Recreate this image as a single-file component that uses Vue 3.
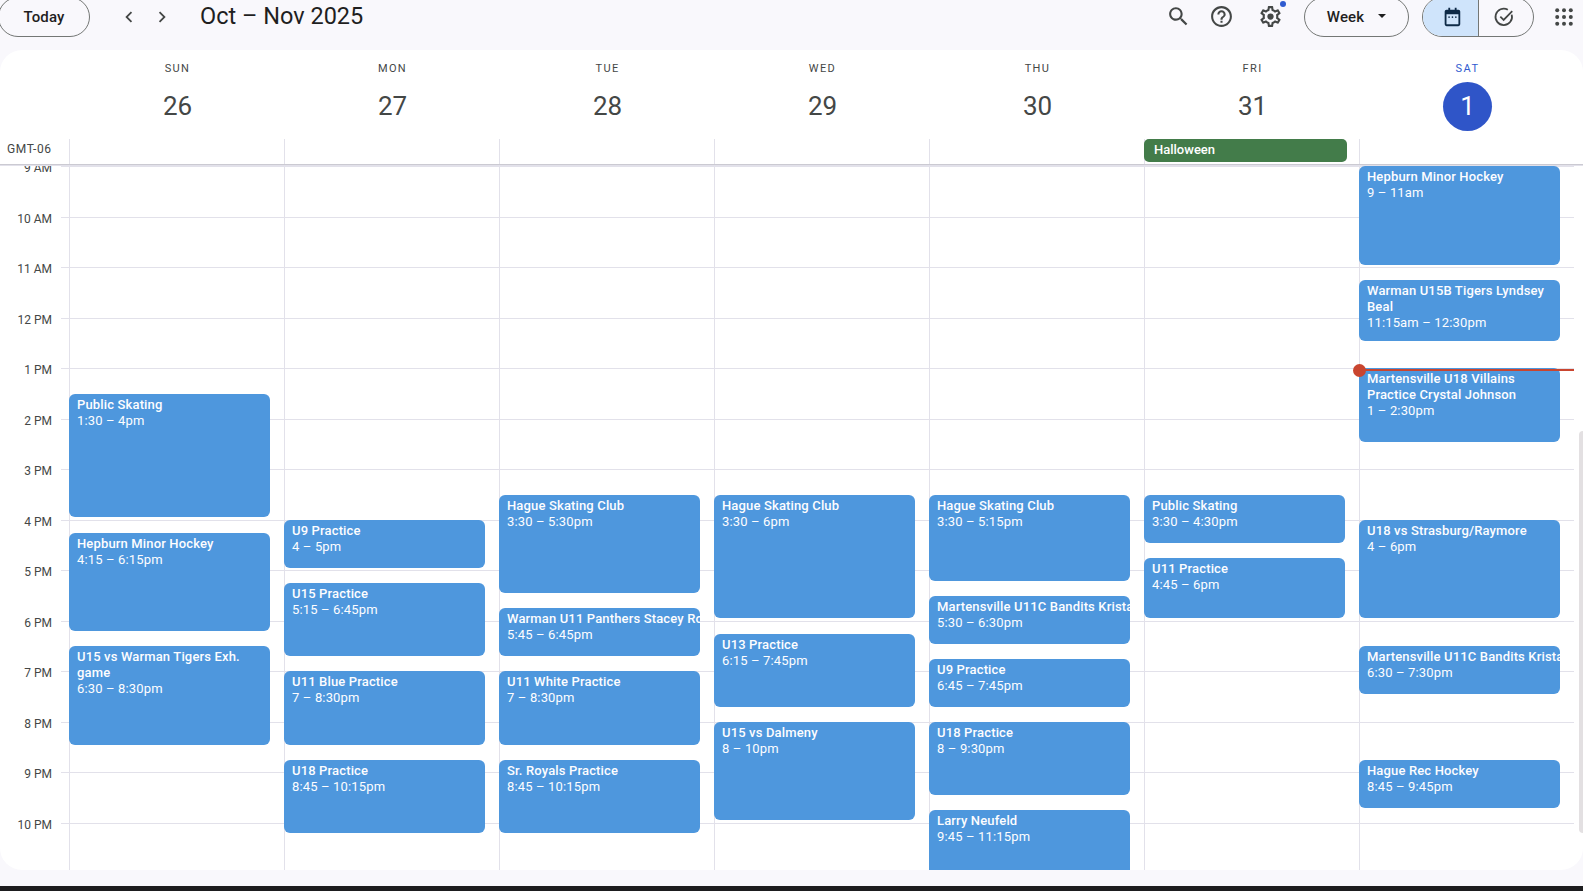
<script setup>
const HOUR = 50.5
const days = [
  { name: 'SUN', num: 26 }, { name: 'MON', num: 27 }, { name: 'TUE', num: 28 },
  { name: 'WED', num: 29 }, { name: 'THU', num: 30 }, { name: 'FRI', num: 31 },
  { name: 'SAT', num: 1, today: true }
]
const hours = ['9 AM','10 AM','11 AM','12 PM','1 PM','2 PM','3 PM','4 PM','5 PM','6 PM','7 PM','8 PM','9 PM','10 PM','11 PM']
const events = [
  [
    { t: 'Public Skating', w: '1:30 – 4pm', s: 13.5, e: 16 },
    { t: 'Hepburn Minor Hockey', w: '4:15 – 6:15pm', s: 16.25, e: 18.25 },
    { t: 'U15 vs Warman Tigers Exh. game', w: '6:30 – 8:30pm', s: 18.5, e: 20.5 }
  ],
  [
    { t: 'U9 Practice', w: '4 – 5pm', s: 16, e: 17 },
    { t: 'U15 Practice', w: '5:15 – 6:45pm', s: 17.25, e: 18.75 },
    { t: 'U11 Blue Practice', w: '7 – 8:30pm', s: 19, e: 20.5 },
    { t: 'U18 Practice', w: '8:45 – 10:15pm', s: 20.75, e: 22.25 }
  ],
  [
    { t: 'Hague Skating Club', w: '3:30 – 5:30pm', s: 15.5, e: 17.5 },
    { t: 'Warman U11 Panthers Stacey Ro', w: '5:45 – 6:45pm', s: 17.75, e: 18.75 },
    { t: 'U11 White Practice', w: '7 – 8:30pm', s: 19, e: 20.5 },
    { t: 'Sr. Royals Practice', w: '8:45 – 10:15pm', s: 20.75, e: 22.25 }
  ],
  [
    { t: 'Hague Skating Club', w: '3:30 – 6pm', s: 15.5, e: 18 },
    { t: 'U13 Practice', w: '6:15 – 7:45pm', s: 18.25, e: 19.75 },
    { t: 'U15 vs Dalmeny', w: '8 – 10pm', s: 20, e: 22 }
  ],
  [
    { t: 'Hague Skating Club', w: '3:30 – 5:15pm', s: 15.5, e: 17.25 },
    { t: 'Martensville U11C Bandits Krista', w: '5:30 – 6:30pm', s: 17.5, e: 18.5 },
    { t: 'U9 Practice', w: '6:45 – 7:45pm', s: 18.75, e: 19.75 },
    { t: 'U18 Practice', w: '8 – 9:30pm', s: 20, e: 21.5 },
    { t: 'Larry Neufeld', w: '9:45 – 11:15pm', s: 21.75, e: 23.25 }
  ],
  [
    { t: 'Public Skating', w: '3:30 – 4:30pm', s: 15.5, e: 16.5 },
    { t: 'U11 Practice', w: '4:45 – 6pm', s: 16.75, e: 18 }
  ],
  [
    { t: 'Hepburn Minor Hockey', w: '9 – 11am', s: 9, e: 11 },
    { t: 'Warman U15B Tigers Lyndsey Beal', w: '11:15am – 12:30pm', s: 11.25, e: 12.5 },
    { t: 'Martensville U18 Villains Practice Crystal Johnson', w: '1 – 2:30pm', s: 13, e: 14.5 },
    { t: 'U18 vs Strasburg/Raymore', w: '4 – 6pm', s: 16, e: 18 },
    { t: 'Martensville U11C Bandits Krista', w: '6:30 – 7:30pm', s: 18.5, e: 19.5 },
    { t: 'Hague Rec Hockey', w: '8:45 – 9:45pm', s: 20.75, e: 21.75 }
  ]
]
const eventStyle = (ev) => ({
  top: `${(ev.s - 9) * HOUR + 1.4}px`,
  height: `${(ev.e - ev.s) * HOUR - 2.5}px`
})
</script>

<template>
  <div class="page">
    <header class="topbar">
      <button class="pill today-btn">Today</button>
      <svg class="chev prev" viewBox="0 0 24 24"><path d="M15.4 7.4 14 6l-6 6 6 6 1.4-1.4L10.8 12z" /></svg>
      <svg class="chev next" viewBox="0 0 24 24"><path d="M8.6 16.6 10 18l6-6-6-6-1.4 1.4 4.6 4.6z" /></svg>
      <h1 class="title">Oct – Nov 2025</h1>

      <svg class="icon search" viewBox="0 0 24 24"><path d="M15.5 14h-.79l-.28-.27C15.41 12.59 16 11.11 16 9.5 16 5.91 13.09 3 9.5 3S3 5.91 3 9.5 5.91 16 9.5 16c1.61 0 3.09-.59 4.23-1.57l.27.28v.79l5 4.99L20.49 19l-4.99-5zm-6 0C7.01 14 5 11.99 5 9.5S7.01 5 9.5 5 14 7.01 14 9.5 11.99 14 9.5 14z" /></svg>
      <svg class="icon help" viewBox="0 0 24 24"><path d="M11 18h2v-2h-2v2zm1-16C6.48 2 2 6.48 2 12s4.48 10 10 10 10-4.48 10-10S17.52 2 12 2zm0 18c-4.41 0-8-3.59-8-8s3.59-8 8-8 8 3.59 8 8-3.59 8-8 8zm0-14c-2.21 0-4 1.79-4 4h2c0-1.1.9-2 2-2s2 .9 2 2c0 2-3 1.75-3 5h2c0-2.25 3-2.5 3-5 0-2.21-1.79-4-4-4z" /></svg>
      <div class="gear-wrap">
        <svg class="gear" viewBox="0 0 24 24"><path d="M19.43 12.98c.04-.32.07-.64.07-.98 0-.34-.03-.66-.07-.98l2.11-1.65c.19-.15.24-.42.12-.64l-2-3.46c-.09-.16-.26-.25-.44-.25-.06 0-.12.01-.17.03l-2.49 1c-.52-.4-1.08-.73-1.69-.98l-.38-2.65C14.46 2.18 14.25 2 14 2h-4c-.25 0-.46.18-.49.42l-.38 2.65c-.61.25-1.17.59-1.69.98l-2.49-1c-.06-.02-.12-.03-.18-.03-.17 0-.34.09-.43.25l-2 3.46c-.13.22-.07.49.12.64l2.11 1.65c-.04.32-.07.65-.07.98 0 .33.03.66.07.98l-2.11 1.65c-.19.15-.24.42-.12.64l2 3.46c.09.16.26.25.44.25.06 0 .12-.01.17-.03l2.49-1c.52.4 1.08.73 1.69.98l.38 2.65c.03.24.24.42.49.42h4c.25 0 .46-.18.49-.42l.38-2.65c.61-.25 1.17-.59 1.69-.98l2.49 1c.06.02.12.03.18.03.17 0 .34-.09.43-.25l2-3.46c.12-.22.07-.49-.12-.64l-2.11-1.65zm-1.98-1.71c.04.31.05.52.05.73 0 .21-.02.43-.05.73l-.14 1.13.89.7 1.08.84-.7 1.21-1.27-.51-1.04-.42-.9.68c-.43.32-.84.56-1.25.73l-1.06.43-.16 1.13-.2 1.35h-1.4l-.19-1.35-.16-1.13-1.06-.43c-.43-.18-.83-.41-1.23-.71l-.91-.7-1.06.43-1.27.51-.7-1.21 1.08-.84.89-.7-.14-1.13c-.03-.31-.05-.54-.05-.74s.02-.43.05-.73l.14-1.13-.89-.7-1.08-.84.7-1.21 1.27.51 1.04.42.9-.68c.43-.32.84-.56 1.25-.73l1.06-.43.16-1.13.2-1.35h1.39l.19 1.35.16 1.13 1.06.43c.43.18.83.41 1.23.71l.91.7 1.06-.43 1.27-.51.7 1.21-1.07.85-.89.7.14 1.13z" /><circle cx="12" cy="12" r="3" /></svg>
        <span class="gear-dot"></span>
      </div>

      <button class="pill week">Week<span class="caret"></span></button>

      <div class="segment">
        <div class="seg seg-on">
          <svg class="seg-icon" viewBox="0 0 24 24">
            <path class="navy" d="M8 2h2v3H8zM15 2h2v3h-2z" />
            <path class="navy" d="M6 4h13a2 2 0 0 1 2 2v14a2 2 0 0 1-2 2H6a2 2 0 0 1-2-2V6a2 2 0 0 1 2-2zm0 5v11h13V9z" />
            <circle class="navy" cx="8.8" cy="12.2" r=".9" /><circle class="navy" cx="12.5" cy="12.2" r=".9" /><circle class="navy" cx="16.2" cy="12.2" r=".9" />
          </svg>
        </div>
        <div class="seg seg-tasks">
          <svg class="seg-icon" viewBox="0 0 24 24">
            <path class="stroke" d="M20.4 9.4A9 9 0 1 1 16.2 4" />
            <path class="stroke" d="m8 11.6 3.6 3.6L21 5.6" />
          </svg>
        </div>
      </div>

      <svg class="apps" viewBox="0 0 18 18">
        <template v-for="y in [2.2, 9, 15.8]" :key="y">
          <circle v-for="x in [2.2, 9, 15.8]" :key="x" :cx="x" :cy="y" r="2" />
        </template>
      </svg>
    </header>

    <main class="card">
      <div class="head">
        <div class="gutter head-gutter"></div>
        <div v-for="d in days" :key="d.name" class="day-head" :class="{ today: d.today }">
          <div class="dow">{{ d.name }}</div>
          <div class="num">{{ d.num }}</div>
        </div>
      </div>

      <div class="allday">
        <div class="gutter tz">GMT-06</div>
        <div v-for="(d, i) in days" :key="d.name" class="allday-col">
          <div v-if="i === 5" class="chip">Halloween</div>
        </div>
      </div>

      <div class="body">
        <div class="gutter labels">
          <div v-for="h in hours" :key="h" class="hour-label"><span>{{ h }}</span></div>
        </div>
        <div v-for="(list, i) in events" :key="i" class="col">
          <div v-for="h in hours" :key="h" class="hour-line"></div>
          <div
            v-for="ev in list"
            :key="ev.t + ev.s"
            class="event"
            :class="{ clip: ev.e - ev.s <= 1 }"
            :style="eventStyle(ev)"
          >
            <div class="ev-title">{{ ev.t }}</div>
            <div class="ev-time">{{ ev.w }}</div>
          </div>
          <div v-if="i === 6" class="now"><span class="now-dot"></span></div>
        </div>
        <div class="scrollbar"></div>
      </div>
    </main>
    <div class="taskbar"></div>
  </div>
</template>

<style>
html, body { margin: 0; overflow: hidden; background: #f9f8fc; }
</style>

<style scoped>
.page {
  width: 1583px;
  height: 891px;
  display: flex;
  flex-direction: column;
  background: #f9f8fc;
  font-family: Roboto, "Liberation Sans", sans-serif;
  overflow: hidden;
}
.topbar {
  height: 34px;
  padding: 0 10px 16px 0;
  display: flex;
  align-items: center;
  flex: none;
}
.pill {
  height: 40px;
  box-sizing: border-box;
  border: 1px solid #747775;
  border-radius: 20px;
  background: transparent;
  font-family: inherit;
  font-size: 15px;
  font-weight: 500;
  color: #1f1f1f;
  letter-spacing: .1px;
  padding: 0 0 1px;
  flex: none;
}
.today-btn { width: 92px; margin-left: -2px; }
.chev { width: 22px; height: 22px; fill: #444746; flex: none; margin-top: -1px; }
.prev { margin-left: 28px; }
.next { margin-left: 11px; }
.title {
  margin: -2px 0 0 27px;
  font-size: 23.5px;
  font-weight: 400;
  color: #1f1f1f;
  white-space: nowrap;
}
.icon { width: 25px; height: 25px; fill: #444746; display: block; flex: none; margin-top: -1px; }
.search { margin-left: auto; margin-right: 18px; }
.help { margin-right: 24px; }
.gear-wrap { position: relative; width: 25px; height: 25px; flex: none; margin-top: -1px; }
.gear { width: 25px; height: 25px; fill: #444746; display: block; }
.gear-dot {
  position: absolute;
  right: -3px;
  top: -3px;
  width: 6px;
  height: 6px;
  border-radius: 50%;
  background: #2f5bd0;
}
.week {
  width: 105px;
  margin-left: 21px;
  display: flex;
  align-items: center;
  justify-content: center;
  gap: 14px;
}
.caret {
  width: 0;
  height: 0;
  border-left: 4px solid transparent;
  border-right: 4px solid transparent;
  border-top: 4px solid #1f1f1f;
  margin-bottom: 2px;
}
.segment {
  width: 112px;
  height: 40px;
  margin-left: 13px;
  box-sizing: border-box;
  border: 1px solid #747775;
  border-radius: 20px;
  display: flex;
  overflow: hidden;
  flex: none;
}
.seg { flex: 1; display: flex; align-items: center; justify-content: center; }
.seg-on { background: #cfe4fb; border-right: 1px solid #747775; flex: none; width: 56px; box-sizing: border-box; padding-left: 2px; }
.seg-tasks { padding-right: 4px; }
.seg-icon { width: 22px; height: 22px; margin-top: -1px; }
.navy { fill: #0e2a47; fill-rule: evenodd; }
.stroke { fill: none; stroke: #444746; stroke-width: 1.9; }
.apps { width: 18px; height: 18px; fill: #444746; margin-left: 21px; flex: none; }

.card {
  height: 820px;
  flex: none;
  background: #fff;
  border-radius: 22px;
  overflow: hidden;
  display: flex;
  flex-direction: column;
}
.taskbar { height: 5px; margin-top: 16px; background: #1d1d1f; flex: none; }

.gutter { width: 69px; flex: none; }
.head { display: flex; height: 88px; flex: none; }
.head-gutter { width: 70px; }
.day-head { width: 215px; display: flex; flex-direction: column; align-items: center; }
.dow {
  margin-top: 12px;
  height: 14px;
  line-height: 14px;
  font-size: 11px;
  font-weight: 400;
  letter-spacing: 1.4px;
  color: #444746;
}
.num {
  margin-top: 6px;
  width: 49px;
  height: 49px;
  line-height: 49px;
  border-radius: 50%;
  text-align: center;
  font-size: 26px;
  color: #444746;
}
.today .dow { color: #2f5bd0; }
.today .num { background: #2f55c8; color: #fff; }

.allday {
  display: flex;
  height: 27px;
  flex: none;
  box-sizing: border-box;
  border-bottom: 1px solid #cbcad2;
}
.tz {
  font-size: 12px;
  letter-spacing: .6px;
  color: #444746;
  padding: 4px 0 0 7px;
  box-sizing: border-box;
  line-height: 14px;
}
.allday-col {
  width: 215px;
  box-sizing: border-box;
  border-left: 1px solid #e2e1ea;
  margin-top: 1px;
  position: relative;
}
.chip {
  position: absolute;
  left: -1px;
  top: 0;
  width: 203px;
  height: 23px;
  box-sizing: border-box;
  padding-left: 10px;
  line-height: 22px;
  border-radius: 5px;
  background: #437c4a;
  color: #fff;
  font-size: 13px;
  font-weight: 500;
}

.body {
  position: relative;
  display: flex;
  flex: 1;
  min-height: 0;
  overflow: hidden;
  padding-top: 0;
  border-top: 1px solid #e2e1ea;
}
.labels { display: flex; flex-direction: column; }
.hour-label {
  height: 50.5px;
  flex: none;
  box-sizing: border-box;
  border-top: 1px solid #e2e1ea;
  margin-left: 61px;
  position: relative;
}
.hour-label span {
  position: absolute;
  right: 17px;
  top: -7px;
  width: 50px;
  text-align: right;
  font-size: 12px;
  line-height: 16px;
  color: #444746;
  white-space: nowrap;
}
.col {
  width: 215px;
  flex: none;
  box-sizing: border-box;
  border-left: 1px solid #e2e1ea;
  position: relative;
  margin-top: -1px;
  padding-top: 1px;
}
.hour-line {
  height: 50.5px;
  box-sizing: border-box;
  border-top: 1px solid #e2e1ea;
}
.event {
  position: absolute;
  left: -1px;
  width: 201px;
  box-sizing: border-box;
  padding: 3px 8px 0;
  border-radius: 6px;
  background: #4e97dd;
  color: #fdfdff;
  font-size: 13px;
  line-height: 16px;
  overflow: hidden;
}
.ev-title { font-weight: 500; letter-spacing: .15px; }
.ev-time { letter-spacing: .15px; }
.clip .ev-title { white-space: nowrap; }
.now {
  position: absolute;
  left: -1px;
  right: 0;
  top: 204px;
  height: 2px;
  background: #c9452f;
}
.now-dot {
  position: absolute;
  left: -6px;
  top: -5px;
  width: 13px;
  height: 13px;
  border-radius: 50%;
  background: #c9452f;
}
.scrollbar {
  position: absolute;
  right: 0;
  top: 265px;
  width: 4px;
  height: 402px;
  border-radius: 4px 0 0 4px;
  background: #e3e0e2;
}
</style>
